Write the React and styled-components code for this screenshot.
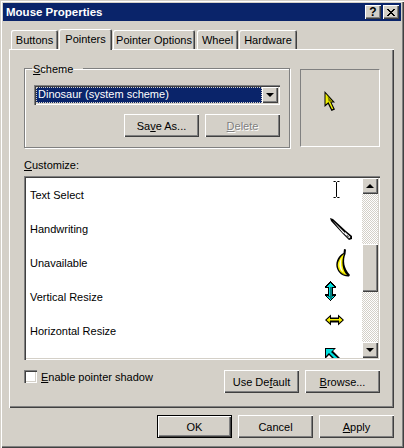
import styled, { createGlobalStyle } from "styled-components"

const GlobalStyle = createGlobalStyle`
  html, body { margin: 0; padding: 0; background: #d4d0c8; }
  body { font-family: "Liberation Sans", Arial, sans-serif; font-size: 11px; color: #000; }
  u { text-underline-offset: 1px; }
`

const Window = styled.div`
  box-sizing: border-box;
  width: 404px;
  height: 448px;
  padding: 3px 3px 0;
  background: #d4d0c8;
  box-shadow: inset 1px 1px #d4d0c8, inset 2px 2px #fff, inset -1px -1px #404040, inset -2px -2px #808080;
  overflow: hidden;
`
const TitleBar = styled.div`
  height: 18px;
  background: #0a246a;
  display: flex;
  align-items: center;
  padding: 0 2px 0 3px;
`
const TitleText = styled.span`
  flex: 1;
  color: #fff;
  font-weight: 700;
  font-size: 11.5px;
`
const CaptionButton = styled.div`
  width: 16px;
  height: 14px;
  margin-left: ${p => p.gap || 0}px;
  background: #d4d0c8;
  box-shadow: inset 1px 1px #fff, inset -1px -1px #404040, inset -2px -2px #808080;
  display: flex;
  align-items: center;
  justify-content: center;
  font-weight: 700;
  font-size: 12px;
  line-height: 14px;
`
const TabRow = styled.div`
  display: flex;
  align-items: flex-end;
  height: 21px;
  margin: 7px 0 0 8px;
  position: relative;
  z-index: 1;
`
const Tab = styled.div`
  box-sizing: border-box;
  width: ${p => p.w}px;
  height: ${p => (p.active ? 21 : 19)}px;
  margin-left: ${p => p.ml || 0}px;
  margin-bottom: ${p => (p.active ? -1 : 0)}px;
  padding-top: 3px;
  background: #d4d0c8;
  border-radius: 2px 2px 0 0;
  text-align: center;
  line-height: 15px;
  box-shadow: inset 1px 1px #fff, inset -1px 0 #404040, inset -2px 0 #808080;
`
const Panel = styled.div`
  box-sizing: border-box;
  width: 385px;
  height: 359px;
  margin: 0 0 0 6px;
  padding: 11px 14px 0 15px;
  box-shadow: inset 1px 1px #fff, inset -1px -1px #404040, inset -2px -2px #808080;
`
const TopRow = styled.div`
  display: flex;
  gap: 10px;
  height: 88px;
`
const Group = styled.fieldset`
  box-sizing: border-box;
  margin: 0;
  width: 266px;
  height: 88px;
  padding: 0 9px;
  border: 1px solid #808080;
  box-shadow: 1px 1px #fff, inset 1px 1px #fff;
`
const Legend = styled.legend`
  margin-left: -2px;
  padding: 3px 10px 0 1px;
  line-height: 13px;
`
const Select = styled.div`
  box-sizing: border-box;
  height: 20px;
  margin-top: 9px;
  padding: 2px;
  display: flex;
  background: #fff;
  box-shadow: inset 1px 1px #808080, inset 2px 2px #404040, inset -1px -1px #fff, inset -2px -2px #d4d0c8;
`
const SelectValue = styled.div`
  flex: 1;
  background: #0a246a;
  color: #fff;
  outline: 1px dotted #d4d0c8;
  outline-offset: -1px;
  padding-left: 2px;
  line-height: 15px;
`
const SelectArrow = styled.div`
  width: 16px;
  background: #d4d0c8;
  box-shadow: inset 1px 1px #fff, inset -1px -1px #404040, inset -2px -2px #808080;
  display: flex;
  align-items: center;
  justify-content: center;
`
const Triangle = styled.div`
  width: 0;
  height: 0;
  border-left: 4px solid transparent;
  border-right: 4px solid transparent;
  border-${p => (p.up ? "bottom" : "top")}: 4px solid #000;
`
const ButtonRow = styled.div`
  display: flex;
  justify-content: flex-end;
  gap: 6px;
  margin-top: ${p => p.mt || 0}px;
`
const Button = styled.div`
  box-sizing: border-box;
  width: 75px;
  height: 23px;
  display: flex;
  align-items: center;
  justify-content: center;
  background: #d4d0c8;
  color: ${p => (p.disabled ? "#808080" : "#000")};
  text-shadow: ${p => (p.disabled ? "1px 1px #fff" : "none")};
  box-shadow: ${p =>
    p.primary
      ? "inset 0 0 0 1px #000, inset 2px 2px #fff, inset -2px -2px #404040, inset -3px -3px #808080"
      : "inset 1px 1px #fff, inset -1px -1px #404040, inset -2px -2px #808080"};
`
const Preview = styled.div`
  box-sizing: border-box;
  width: 80px;
  height: 78px;
  margin-top: 9px;
  border: 1px solid;
  border-color: #808080 #fff #fff #808080;
  padding: 21px 0 0 23px;
`
const CustomizeLabel = styled.div`
  margin-top: 10px;
  line-height: 14px;
  height: 14px;
`
const ListBox = styled.div`
  box-sizing: border-box;
  width: 356px;
  height: 184px;
  margin-top: 4px;
  padding: 2px;
  display: flex;
  background: #fff;
  box-shadow: inset 1px 1px #808080, inset 2px 2px #404040, inset -1px -1px #fff, inset -2px -2px #d4d0c8;
`
const ListRows = styled.div`
  flex: 1;
  height: 180px;
  overflow: hidden;
`
const ListRow = styled.div`
  height: 34px;
  display: flex;
  align-items: center;
  justify-content: space-between;
  padding: 0 5px 0 4px;
`
const Scrollbar = styled.div`
  width: 16px;
  display: flex;
  flex-direction: column;
  background: repeating-conic-gradient(#fff 0 25%, #d4d0c8 0 50%) 0 0 / 2px 2px;
`
const ScrollButton = styled.div`
  height: ${p => p.h || 16}px;
  flex: none;
  margin-top: ${p => p.mt || 0}px;
  background: #d4d0c8;
  display: flex;
  align-items: center;
  justify-content: center;
  box-shadow: inset 1px 1px #fff, inset -1px -1px #404040, inset -2px -2px #808080;
`
const BottomRow = styled.div`
  display: flex;
  justify-content: space-between;
  margin-top: 10px;
`
const CheckLabel = styled.div`
  display: flex;
  gap: 4px;
  line-height: 15px;
  height: 15px;
`
const CheckBox = styled.div`
  box-sizing: border-box;
  width: 13px;
  height: 13px;
  background: #fff;
  box-shadow: inset 1px 1px #808080, inset 2px 2px #404040, inset -1px -1px #fff, inset -2px -2px #d4d0c8;
`
const DialogButtons = styled.div`
  display: flex;
  justify-content: flex-end;
  gap: 6px;
  margin: 7px 7px 0 0;
`

const CloseGlyph = () => (
  <svg width="8" height="7" viewBox="0 0 8 7" shapeRendering="crispEdges">
    <path d="M0 0h2v1h1v1h2V1h1V0h2v1H7v1H6v1H5v1h1v1h1v1h1v1H6V6H5V5H3v1H2v1H0V6h1V5h1V4h1V3H2V2H1V1H0z" fill="#000" />
  </svg>
)

const ArrowCursor = () => (
  <svg width="12" height="20" viewBox="0 0 12 20">
    <polygon points="0.5,0 11,11.5 7.5,11.5 11,18.5 7.5,20 4,13 0.5,16" fill="#000" />
    <polygon points="1.5,2.5 1.5,13.5 4.5,11 8,18.3 9.3,17.8 6,10.5 8.5,10.5" fill="#f0f000" />
    <polygon points="3.5,5 8.5,10.5 4.5,10.5" fill="#808000" />
  </svg>
)

const icons = {
  text: (
    <path d="M8.5 3.5h2l1 1 1-1h2M11.5 4.5v14M8.5 19.5h2l1-1 1 1h2" fill="none" stroke="#000" />
  ),
  hand: (
    <g>
      <polygon points="5,6 8,7 21,19 27,24 27,27 24,28 18,22 6,9" fill="#000" />
      <polygon points="7.5,8.5 19.5,20.5 18.5,21.5" fill="#fff" />
      <polygon points="20,20 25.5,25 24,26.5 19,21.5" fill="#fff" />
      <polygon points="22,23 24,25 23.5,25.5 21.5,23.5" fill="#000" />
    </g>
  ),
  banana: (
    <g>
      <path d="M19 3 L21 3.5 L20.5 8 C18 14 18.5 22 25 29 L24 30.5 C18 31 13 27 11.5 21 C10.5 15 14 9 18.5 7 Z" fill="#000" />
      <path d="M19 8 C15 11 12.5 16 12.8 20 C13.5 25 17 28.5 22 29 C17.5 25 16 15 19 8 Z" fill="#f8f000" />
      <path d="M16.5 12 C14.5 15 14 18 14.6 21 C15.3 23.5 16.5 25 18 26 C16 22 15.5 17 16.5 12 Z" fill="#fffff0" />
      <path d="M15 24 C16.5 26.5 18.5 28 21 28.7 L19 28.8 C17 27.8 15.8 26 15 24 Z" fill="#808000" />
    </g>
  ),
  vertical: (
    <g shapeRendering="crispEdges">
      <path d="M5 1h1v1h1v1h1v1h1v1h1v1h1v2H8v6h3v2h-1v1H9v1H8v1H7v1H6v1H5v-1H4v-1H3v-1H2v-1H1v-1H0v-2h3V8H0V6h1V5h1V4h1V3h1V2h1z" fill="#000" />
      <path d="M5 3h1v1h1v1h1v1h1v1H7v9h2v1H8v1H7v1H6v1H5v-1H4v-1H3v-1H2v-1h2V7H2V6h1V5h1V4h1z" fill="#00e0e0" />
      <rect x="5" y="7" width="2" height="9" fill="#008080" />
      <rect x="3" y="16" width="5" height="1" fill="#008080" />
      <rect x="5" y="17" width="2" height="2" fill="#008080" />
    </g>
  ),
  horizontal: (
    <g>
      <polygon points="0,6 6,0.5 6,3.5 13,3.5 13,0.5 19,6 13,11.5 13,8.5 6,8.5 6,11.5" fill="#000" />
      <polygon points="1.5,6 5,3 5,5 14,5 14,3 17.5,6 14,9 14,7 5,7 5,9" fill="#f8f000" />
      <rect x="5" y="6.5" width="9" height="1.5" fill="#000" />
      <polygon points="3,7.5 5,7.5 5,9" fill="#808000" />
      <polygon points="14,7.5 16,7.5 14,9" fill="#808000" />
    </g>
  ),
  diagonal: (
    <g>
      <polygon points="0,0 11,0 8,3 19,14 15,18 4,7 0,11" fill="#000" />
      <polygon points="1,1 9,1 6,4 17,14 15,16 4,5 1,8" fill="#00e0e0" />
    </g>
  ),
}

const rows = [
  ["Text Select", "text"],
  ["Handwriting", "hand"],
  ["Unavailable", "banana"],
  ["Vertical Resize", "vertical"],
  ["Horizontal Resize", "horizontal"],
  ["", "diagonal"],
]

const tabs = [
  ["Buttons", 47, 0],
  ["Pointers", 53, 1, true],
  ["Pointer Options", 82, 1],
  ["Wheel", 41, 2],
  ["Hardware", 58, 1],
]

const App = () => {
  return (
    <Window>
      <GlobalStyle />
      <TitleBar>
        <TitleText>Mouse Properties</TitleText>
        <CaptionButton>?</CaptionButton>
        <CaptionButton gap={2}><CloseGlyph /></CaptionButton>
      </TitleBar>
      <TabRow>
        {tabs.map(([label, w, ml, active]) => (
          <Tab key={label} w={w} ml={ml} active={active}>{label}</Tab>
        ))}
      </TabRow>
      <Panel>
        <TopRow>
          <Group>
            <Legend><u>S</u>cheme</Legend>
            <Select>
              <SelectValue>Dinosaur (system scheme)</SelectValue>
              <SelectArrow><Triangle /></SelectArrow>
            </Select>
            <ButtonRow mt={9}>
              <Button>Sa<u>v</u>e As...</Button>
              <Button disabled><u>D</u>elete</Button>
            </ButtonRow>
          </Group>
          <Preview><ArrowCursor /></Preview>
        </TopRow>
        <CustomizeLabel><u>C</u>ustomize:</CustomizeLabel>
        <ListBox>
          <ListRows>
            {rows.map(([label, icon]) => (
              <ListRow key={icon}>
                <span>{label}</span>
                <svg width="32" height="34" viewBox="0 0 32 34">{icons[icon]}</svg>
              </ListRow>
            ))}
          </ListRows>
          <Scrollbar>
            <ScrollButton><Triangle up /></ScrollButton>
            <ScrollButton mt={50} h={48} />
            <ScrollButton mt={50}><Triangle /></ScrollButton>
          </Scrollbar>
        </ListBox>
        <BottomRow>
          <CheckLabel>
            <CheckBox />
            <span><u>E</u>nable pointer shadow</span>
          </CheckLabel>
          <ButtonRow>
            <Button>Use De<u>f</u>ault</Button>
            <Button><u>B</u>rowse...</Button>
          </ButtonRow>
        </BottomRow>
      </Panel>
      <DialogButtons>
        <Button primary>OK</Button>
        <Button>Cancel</Button>
        <Button><u>A</u>pply</Button>
      </DialogButtons>
    </Window>
  )
}

export default App
